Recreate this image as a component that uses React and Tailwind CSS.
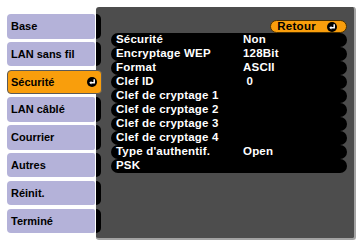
import * as React from 'react';

const tabs = ['Base', 'LAN sans fil', 'Sécurité', 'LAN câblé', 'Courrier', 'Autres', 'Réinit.', 'Terminé'];

const rows = [
  ['Sécurité', 'Non'],
  ['Encryptage WEP', '128Bit'],
  ['Format', 'ASCII'],
  ['Clef ID', '\u00a00'],
  ['Clef de cryptage 1', ''],
  ['Clef de cryptage 2', ''],
  ['Clef de cryptage 3', ''],
  ['Clef de cryptage 4', ''],
  ["Type d'authentif.", 'Open'],
  ['PSK', ''],
];

function EnterIcon() {
  return (
    <svg width="10" height="10" viewBox="0 0 10 10" className="shrink-0">
      <circle cx="5" cy="5" r="5" fill="#000" />
      <path d="M7.2 2.2 V5.8 H4" stroke="#fff" strokeWidth="1.5" fill="none" />
      <path d="M2.2 5.8 L4.4 4 L4.4 7.6 Z" fill="#fff" />
    </svg>
  );
}

export default function App() {
  return (
    <div className="w-[360px] h-[244px] bg-white flex font-['Liberation_Sans',Arial,sans-serif] font-bold">
      {/* Tabs */}
      <div className="flex flex-col gap-[3.3px] pt-[14px] pl-[7px] w-[96px] shrink-0 relative z-10">
        {tabs.map((t) =>
          t === 'Sécurité' ? (
            <div key={t} className="h-[24.5px] w-[95px] bg-[#f99e0c] border border-[#5a5a5a] rounded-[4px] flex items-center justify-between pl-[3px] pr-[4px] text-[11px] text-black">
              <span>{t}</span>
              <EnterIcon />
            </div>
          ) : (
            <div key={t} className="h-[24.5px] w-[88px] bg-[#b4b2d9] rounded-l-[4px] rounded-r-[2px] flex items-center pl-[4px] text-[11px] text-black">
              {t}
            </div>
          )
        )}
      </div>

      {/* Panel */}
      <div className="mt-[7px] w-[260px] h-[233px] bg-[#4d4d4d] border-r-2 border-b-2 border-[#a3a3a3] rounded-[3px] flex shrink-0">
        <div className="flex flex-col gap-[3.3px] pt-[7px] w-[5px] shrink-0">
          {tabs.map((t) => (
            <div key={t} className="h-[24.5px] w-[5px] bg-black rounded-r-[5px]" />
          ))}
        </div>
        <div className="flex flex-col pt-[13px] pl-[10px] w-[246px]">
          <div className="flex justify-end">
            <div className="h-[13px] w-[77px] bg-[#f99e0c] border border-[#4a3000] rounded-full flex items-center justify-end gap-[11px] pr-[9px] text-[11.5px] text-black tracking-[0.3px]">
              <span>Retour</span>
              <EnterIcon />
            </div>
          </div>
          <div className="flex flex-col w-[236px]">
            {rows.map(([label, value], i) => (
              <div key={i} className="h-[14px] bg-black rounded-full flex items-center pl-[5px] text-white text-[11.5px] tracking-[0.2px] leading-none">
                <span className="w-[127px] shrink-0 whitespace-nowrap">{label}</span>
                <span className="whitespace-pre">{value}</span>
              </div>
            ))}
          </div>
        </div>
      </div>
    </div>
  );
}
